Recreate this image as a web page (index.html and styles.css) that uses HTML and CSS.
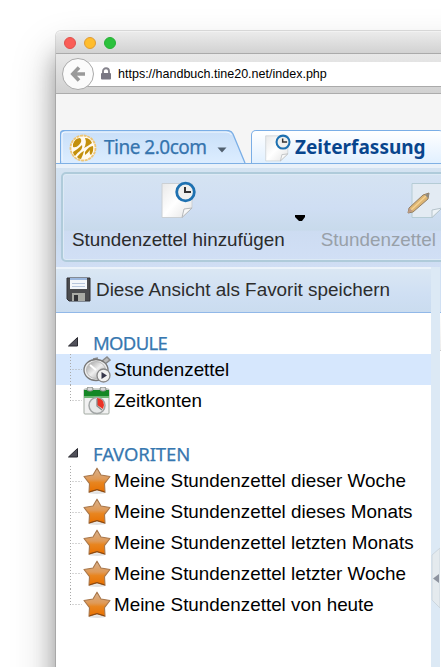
FILE: index.html
```
<!DOCTYPE html>
<html lang="de">
<head>
<meta charset="utf-8">
<title>Zeiterfassung</title>
<link rel="stylesheet" href="styles.css">
</head>
<body>
<svg class="defs" width="0" height="0">
  <defs>
    <linearGradient id="orange" x1="0" y1="0" x2="0" y2="1"><stop offset="0" stop-color="#d7b290"/><stop offset=".45" stop-color="#df9a58"/><stop offset=".6" stop-color="#e8851f"/><stop offset="1" stop-color="#e87000"/></linearGradient>
    <linearGradient id="paper" x1="0" y1="0" x2="1" y2="1"><stop offset="0" stop-color="#e9e9e9"/><stop offset=".5" stop-color="#fff"/><stop offset="1" stop-color="#e3e3e3"/></linearGradient>
    <linearGradient id="metal" x1="0" y1="0" x2="1" y2="1"><stop offset="0" stop-color="#999"/><stop offset=".5" stop-color="#eee"/><stop offset="1" stop-color="#999"/></linearGradient>
  </defs>
  <symbol id="star" viewBox="0 0 28 28">
    <ellipse cx="14" cy="25.6" rx="9" ry="1.4" fill="#e2e2e2"/>
    <path d="M14 1.2 18 8 27 9.500 21.500 16.6 22 25.2 14 22.8 6 25.2 6.500 16.6 1 9.500 10 8Z" fill="url(#orange)" stroke="#a8764a" stroke-width="1.100" stroke-linejoin="round"/>
    <path d="M6.400 24.800 14 22.600 21.600 24.800" fill="none" stroke="#8b4509"/>
  </symbol>
  <symbol id="sheet" viewBox="0 0 36 38">
    <path d="M2 2.500H32V27L22 36.500H2Z" fill="url(#paper)" stroke="#cbd0d4"/>
    <path d="M22 36.500 24 28 32 27Z" fill="#f8f8f8" stroke="#b5b8bb"/>
    <circle cx="25.500" cy="11" r="8.800" fill="#f0f0ee" stroke="#1e71b1" stroke-width="2.800"/>
    <path d="M25 6V11H31" fill="none" stroke="#333" stroke-width="2"/>
  </symbol>
  <symbol id="branch" viewBox="0 0 14 31">
    <path d="M2.500 0V31M4.500 15.500H14" stroke="#aaa" stroke-dasharray="1 2"/>
  </symbol>
  <symbol id="branch-end" viewBox="0 0 14 31">
    <path d="M2.500 0V16M4.500 15.500H14" stroke="#aaa" stroke-dasharray="1 2"/>
  </symbol>
  <symbol id="open" viewBox="0 0 12 12"><path d="M10.500 1.500V10H1.500Z" fill="#51515a" stroke="#292930" stroke-linejoin="round"/></symbol>
</svg>

<div class="window">
  <header class="titlebar"><i class="light red"></i><i class="light yellow"></i><i class="light green"></i></header>
  <div class="navbar">
    <span class="back"><svg width="16" height="16" viewBox="0 0 16 16"><path d="M9 1.500 2.800 8 9 14.500M3 8H15" fill="none" stroke="#999" stroke-width="3.600"/></svg></span>
    <div class="address">
      <svg width="12" height="13" viewBox="0 0 12 13"><path d="M3 6V4.200a3 3 0 0 1 6 0V6" fill="none" stroke="#85838c" stroke-width="1.900"/><rect x="1" y="6" width="10" height="6.500" rx="1" fill="#797783"/></svg>
      <span>https://handbuch.tine20.net/index.php</span>
    </div>
  </div>

  <nav class="tabs">
    <div class="tab first">
      <svg class="tabshape" width="186" height="33" viewBox="0 0 186 33"><defs><linearGradient id="tabfill" x1="0" y1="0" x2="0" y2="1"><stop offset="0" stop-color="#c9dff8"/><stop offset="1" stop-color="#dcedff"/></linearGradient></defs><path d="M.5 33V4Q.5.5 5 .5H167Q171.500.5 173 4L185 33" fill="url(#tabfill)" stroke="#7aaee6" stroke-width="1.300"/><path d="M2 31V5Q2 2 5 2H166Q170 2 171.500 5" fill="none" stroke="#f4f9ff"/></svg>
      <svg class="logo" width="28" height="28" viewBox="0 0 28 28"><circle cx="14" cy="14" r="12.500" fill="#fffaf0" stroke="#eec575" stroke-width="1.800" stroke-dasharray="3 .7"/><path d="M4 10Q6 4 11 4Q14 7 10 11Q7 14 4 13ZM16 4Q21 4 23 9Q19 12 15 14Q18 9 16 4ZM4 18Q9 15 13 11Q14 14 11 17Q8 19 6 22Q4 20 4 18ZM8 23Q12 18 15 17Q14 21 12 25Q9 25 8 23ZM16 18Q20 12 24 12Q25 17 22 21Q20 20 21 16Q18 20 16 21Z" fill="#c3900c"/></svg>
      <span class="tabtext">Tine 2.0com</span>
      <svg class="caret" width="10" height="6" viewBox="0 0 10 6"><path d="M.5.500H9.500L5 5.500Z" fill="#51606f"/></svg>
    </div>
    <div class="tab active">
      <svg class="small-sheet" width="27" height="28"><use href="#sheet"/></svg>
      <span class="tabtext">Zeiterfassung</span>
    </div>
  </nav>

  <div class="toolbar">
    <div class="group">
      <div class="action add"><svg width="36" height="38"><use href="#sheet"/></svg><span>Stundenzettel hinzufügen</span></div>
      <svg class="split" width="10" height="6" viewBox="0 0 10 6"><path d="M0 0H10V2L7 6H4L0 2Z" fill="#000"/></svg>
      <div class="action edit">
        <svg width="38" height="38" viewBox="0 0 38 38"><path d="M6 2.500H36V27L26 36.500H6Z" fill="#e3ebf3" stroke="#b5ccd5"/><path d="M26 36.500V29L36 27Z" fill="#edf3f7" stroke="#b6c4cb"/><path d="M2 32 3 27 17 14 23 12 22 18 7 31Z" fill="#ddb572" stroke="#927e65"/><path d="M5 29 20 15" stroke="#f5d293" stroke-width="1.500"/><path d="M19 14 23 12 22 17Z" fill="#8d8b85"/><path d="M2 32 3 27 7 30Z" fill="#be9b86"/></svg>
        <span>Stundenzettel</span>
      </div>
    </div>
  </div>

  <div class="workspace">
    <aside class="sidebar">
      <div class="favorite">
        <svg width="25" height="25" viewBox="0 0 25 25"><path d="M1 1H24V24H3L1 22Z" fill="#4b4b4e" stroke="#303034"/><path d="M4 1H21V12H4Z" fill="#f4f6fa"/><path d="M4 1H21V3H4Z" fill="#9cb8df"/><path d="M6 6.500H19M6 9.500H19" stroke="#b8c6dd"/><path d="M6 16H19V24H6Z" fill="#a9aaa5"/><path d="M8 18H12V24H8Z" fill="#323236"/></svg>
        <span>Diese Ansicht als Favorit speichern</span>
      </div>
      <section class="tree modules">
        <h2><svg width="12" height="12"><use href="#open"/></svg>MODULE</h2>
        <ul>
          <li class="selected"><svg class="line" width="14" height="31"><use href="#branch"/></svg>
            <svg class="icon" width="28" height="28" viewBox="0 0 28 28"><path d="M19 5 24 1 27 4 22 8M10 3 15 2" fill="#bbb" stroke="#888" stroke-width="1.500"/><ellipse cx="13" cy="14" rx="12" ry="10.500" fill="#eee" stroke="#777" stroke-width="1.300"/><ellipse cx="13" cy="14" rx="9.500" ry="8.500" fill="url(#metal)" stroke="#bbb"/><path d="M13 14 7 9" stroke="#fff" stroke-width="2"/><circle cx="20.500" cy="19.500" r="6.500" fill="#f1f1f1" stroke="#888" stroke-width="1.300"/><path d="M18.500 16V23L24 19.500Z" fill="#37374b"/></svg><span>Stundenzettel</span></li>
          <li><svg class="line" width="14" height="31"><use href="#branch-end"/></svg>
            <svg class="icon" width="28" height="28" viewBox="0 0 28 28"><rect x="1" y="2" width="25" height="25" rx="1" fill="#f1f1f1" stroke="#a2aaa2"/><path d="M1 3H26V10H1Z" fill="#148725"/><path d="M1 9H26V11H1Z" fill="#6cb673"/><rect x="4" y="0" width="6" height="4" rx="2" fill="#d9d9d9" stroke="#858b85"/><rect x="17" y="0" width="6" height="4" rx="2" fill="#d9d9d9" stroke="#858b85"/><circle cx="14" cy="18.500" r="8" fill="#e6e8e8" stroke="#a1a5a5" stroke-width="1.500"/><path d="M14 18V11Q21 12 21 18L20 22Z" fill="#eb3326"/><path d="M14 12V19L19 23" fill="none" stroke="#888" stroke-width="1.300"/></svg><span>Zeitkonten</span></li>
        </ul>
      </section>
      <section class="tree favorites">
        <h2><svg width="12" height="12"><use href="#open"/></svg>FAVORITEN</h2>
        <ul>
          <li><svg class="line" width="14" height="31"><use href="#branch"/></svg><svg class="icon" width="28" height="28"><use href="#star"/></svg><span>Meine Stundenzettel dieser Woche</span></li>
          <li><svg class="line" width="14" height="31"><use href="#branch"/></svg><svg class="icon" width="28" height="28"><use href="#star"/></svg><span>Meine Stundenzettel dieses Monats</span></li>
          <li><svg class="line" width="14" height="31"><use href="#branch"/></svg><svg class="icon" width="28" height="28"><use href="#star"/></svg><span>Meine Stundenzettel letzten Monats</span></li>
          <li><svg class="line" width="14" height="31"><use href="#branch"/></svg><svg class="icon" width="28" height="28"><use href="#star"/></svg><span>Meine Stundenzettel letzter Woche</span></li>
          <li><svg class="line" width="14" height="31"><use href="#branch-end"/></svg><svg class="icon" width="28" height="28"><use href="#star"/></svg><span>Meine Stundenzettel von heute</span></li>
        </ul>
      </section>
    </aside>
    <div class="splitter"><svg width="9" height="62" viewBox="0 0 9 62"><path d="M9 1 1 8V53L9 61Z" fill="#e4eaee" stroke="#ccd6de"/><path d="M8 27V36L2 31.500Z" fill="#8d939f"/></svg></div>
    <main class="content"><div class="grid-toolbar"></div><div class="grid-head"></div></main>
  </div>
</div>
</body>
</html>
```

FILE: styles.css
```
* { box-sizing: border-box; }
html, body { width: 441px; height: 667px; overflow: hidden; }
body { margin: 0; padding: 31px 0 0 56px; background: #fff; font: 18.85px/22px "Liberation Sans", Arial, sans-serif; color: #000; }
svg { display: block; flex: none; }
.defs { position: absolute; }
.window { width: 800px; height: 800px; border-radius: 5px 0 0 0; background: #f6f6f6; box-shadow: 0 0 0 1px rgba(0,0,0,.13), 0 24px 44px rgba(0,0,0,.28), 0 24px 22px rgba(0,0,0,.26); }
.titlebar { display: flex; gap: 8px; height: 23px; padding: 5px 0 0 8px; border-top: 1px solid #f2f2f2; border-bottom: 1px solid #aaa; border-radius: 5px 0 0 0; background: linear-gradient(#ebebeb, #d2d2d2); }
.light { width: 12px; height: 12px; border-radius: 50%; }
.red { background: #fa5d57; border: 1px solid #df514d; }
.yellow { background: #ffbd2d; border: 1px solid #df9b35; }
.green { background: #2bc13c; border: 1px solid #26b035; }
.navbar { display: flex; align-items: center; height: 40px; padding-left: 6px; border-bottom: 1px solid #acacac; background: linear-gradient(#e8e8e8, #d1d1d1); }
.back { z-index: 1; display: flex; align-items: center; justify-content: center; flex: none; width: 32px; height: 32px; border: 1px solid #aaa; border-radius: 50%; background: #fbfbfb; }
.address { display: flex; align-items: center; gap: 6px; flex: 1; height: 25px; margin: 2px 0 0 -10px; padding-left: 16px; border-bottom: 1px solid #aaa; background: #fff; font-size: 12.53px; }
.address svg { margin-top: -2px; }
.tabs { display: flex; height: 70px; padding: 36px 0 0 4px; border-bottom: 1px solid #7fb0e4; background: #f5f5f5; }
.tab { position: relative; display: flex; flex: none; height: 33px; font-family: "Noto Sans", sans-serif; }
.first { width: 191px; padding: 4px 0 0 9px; color: #3574ae; }
.tabshape { position: absolute; left: 0; top: 0; }
.logo, .first .tabtext, .caret { position: relative; }
.first .tabtext { margin-left: 7px; font-size: 19px; line-height: 26px; letter-spacing: -.5px; -webkit-text-stroke: .25px #3574ae; }
.caret { margin: 13px 0 0 10px; }
.active { width: 193px; padding: 3px 0 0 12px; border: 1px solid #7aaee6; border-bottom: 0; border-radius: 5px 5px 0 0; background: linear-gradient(#fff, #e1f0ff); color: #08458d; font-weight: 700; }
.active .tabtext { margin-left: 4px; font-size: 19px; line-height: 26px; }
.toolbar { height: 103px; padding: 4px 0 0 5px; border-top: 4px solid #e9f1f9; background: linear-gradient(#d4e3f1, #cdddf3 50%, #c9dbee 70%, #d0def4); }
.group { display: flex; height: 90px; padding: 7px 0 0 9px; border: 2px solid #afcbda; border-radius: 5px; box-shadow: inset 0 0 0 1px #ddeaf5; background: linear-gradient(#d5e3f2, #cfdef3 40%, #c8daeb 65%, #cddcf2 67%, #d1dff5); }
.action { display: flex; flex-direction: column; align-items: center; color: #2b2b2b; }
.add span, .edit span { margin-top: 10px; white-space: nowrap; }
.split { margin: 34px 0 0 10px; }
.edit { align-items: flex-start; margin-left: 16px; color: #98a0a8; }
.edit svg { margin-left: 85px; }
.workspace { display: flex; height: 533px; }
.sidebar { width: 375px; background: #fff; }
.favorite { display: flex; align-items: center; gap: 5px; height: 46px; padding: 0 0 2px 10px; border-top: 2px solid #ecf3fa; border-bottom: 1px solid #91b8e8; background: linear-gradient(#dae7f3, #cfdff3 60%, #cadcef); color: #2d2d2d; font-size: 18.9px; }
.tree h2 { display: flex; align-items: center; gap: 14px; height: 23px; margin: 0; padding-left: 11px; color: #3778b0; font: 400 18.500px/23px "Noto Sans", sans-serif; letter-spacing: -.6px; -webkit-text-stroke: .25px #3778b0; }
.tree h2 svg { margin-top: -2px; }
.modules { padding-top: 18px; }
.modules h2 { letter-spacing: -.7px; }
.favorites { padding-top: 26px; }
.favorites h2 { letter-spacing: -.1px; }
.modules ul { margin: 0; }
.favorites ul { margin-top: 1px; }
ul { margin: 0; padding: 0; list-style: none; }
li { display: flex; align-items: center; height: 31px; padding-left: 12px; white-space: nowrap; }
.favorites li { height: 30.8px; }
.selected { background: #d6e7fd; }
.icon { margin: 0 3px 0 1px; }
.splitter { display: flex; width: 9px; background: #dce9f5; }
.splitter svg { margin-top: 280px; }
.content { flex: 1; background: #fff; }
.grid-toolbar { height: 46px; border-bottom: 1px solid #91b8e8; background: #d0e0f3; }
.grid-head { height: 38px; border-bottom: 1px solid #ccc; background: linear-gradient(#fff, #ececec); }
```
